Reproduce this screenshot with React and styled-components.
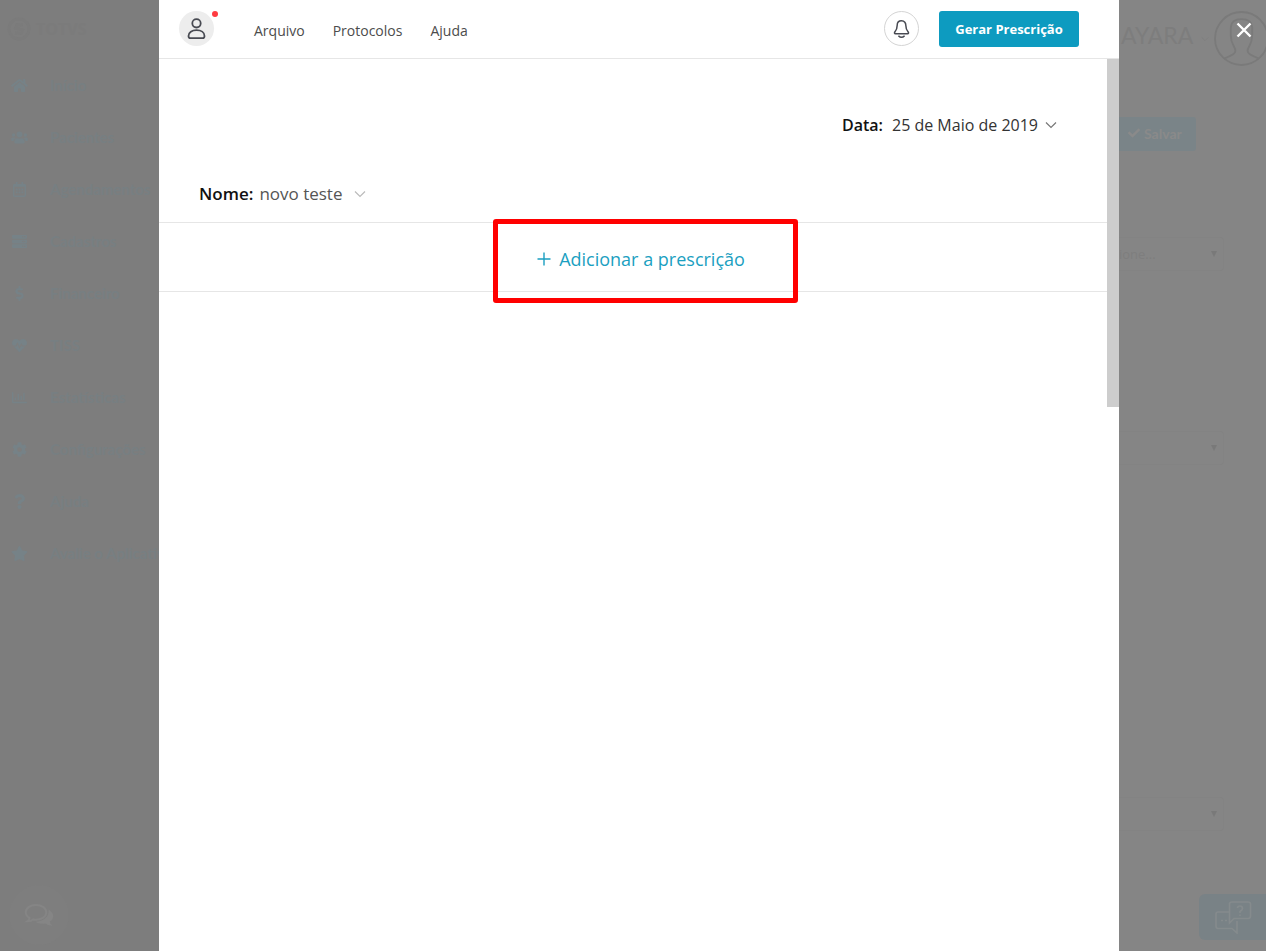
import React from 'react';
import styled, { createGlobalStyle } from 'styled-components';
import {
  FaHome,
  FaUsers,
  FaRegCalendarAlt,
  FaServer,
  FaDollarSign,
  FaHeartbeat,
  FaRegChartBar,
  FaCog,
  FaQuestion,
  FaStar,
  FaCheck,
} from 'react-icons/fa';

const GlobalStyle = createGlobalStyle`
  * {
    box-sizing: border-box;
  }

  body {
    margin: 0;
    font-family: 'Open Sans', sans-serif;
    background: #7d7d7d;
  }

  button, select, input {
    font-family: inherit;
  }
`;

const Page = styled.div`
  display: flex;
  min-height: 100vh;
`;

// Dimmed sidebar
const Sidebar = styled.aside`
  display: flex;
  flex-direction: column;
  flex: 0 0 159px;
  overflow: hidden;
  background: #7d7d7d;
`;

const Brand = styled.div`
  display: flex;
  align-items: center;
  gap: 5px;
  height: 59px;
  padding: 0 0 2px 7px;
  color: #7b7b7b;
  font-size: 16px;
  font-weight: 700;
`;

const SideNav = styled.nav`
  display: flex;
  flex-direction: column;
  flex: 1;
`;

const SideLink = styled.a`
  display: flex;
  align-items: center;
  gap: 22px;
  height: 52px;
  padding-left: 11px;
  color: #777f82;
  font-family: Lato, sans-serif;
  font-size: 15px;
  font-weight: 700;
  white-space: nowrap;
  text-decoration: none;

  svg {
    flex: 0 0 17px;
    color: #768287;
  }
`;

const ChatButton = styled.button`
  display: flex;
  align-items: center;
  justify-content: center;
  width: 60px;
  height: 60px;
  margin: 0 0 6px 9px;
  padding: 0;
  border: 0;
  border-radius: 50%;
  background: #7e7e7e;
  color: #858585;
`;

// Prescription panel
const Panel = styled.main`
  display: flex;
  flex-direction: column;
  flex: 1;
  background: #fff;
`;

const Header = styled.header`
  display: flex;
  align-items: center;
  height: 59px;
  padding: 0 40px 1px 20px;
  border-bottom: 1px solid #e6e6e6;
`;

const ProfileButton = styled.button`
  position: relative;
  display: flex;
  align-items: center;
  justify-content: center;
  width: 35px;
  height: 35px;
  padding: 0;
  border: 0;
  border-radius: 50%;
  background: #ededed;
  color: #484a52;
`;

const Dot = styled.span`
  position: absolute;
  top: 0;
  right: -4px;
  width: 6px;
  height: 6px;
  border-radius: 50%;
  background: #ff3b41;
`;

const Menu = styled.nav`
  display: flex;
  gap: 28px;
  flex: 1;
  padding: 5px 0 0 40px;
`;

const MenuLink = styled.a`
  color: #4c4c4c;
  font-size: 14px;
  line-height: 20px;
  text-decoration: none;
`;

const BellButton = styled.button`
  display: flex;
  align-items: center;
  justify-content: center;
  width: 35px;
  height: 35px;
  margin-right: 20px;
  padding: 0;
  border: 1px solid #d4d4d4;
  border-radius: 50%;
  background: #fff;
  color: #484a52;
`;

const PrimaryButton = styled.button`
  width: 140px;
  height: 36px;
  padding: 0;
  border: 0;
  border-radius: 3px;
  background: #0d9bc0;
  color: #fff;
  font-size: 13px;
  font-weight: 700;
`;

const Body = styled.div`
  display: flex;
  flex: 1;
`;

const Sheet = styled.section`
  flex: 1;
`;

const Scrollbar = styled.div`
  display: flex;
  flex-direction: column;
  width: 12px;
`;

const Thumb = styled.div`
  height: 39%;
  background: #cdcdcd;
`;

const DateRow = styled.div`
  display: flex;
  justify-content: flex-end;
  padding: 54px 50px 0 0;
`;

const NameRow = styled.div`
  display: flex;
  padding: 45px 40px 16px;
  border-bottom: 1px solid #e6e6e6;
`;

const Picker = styled.button`
  display: flex;
  align-items: center;
  padding: 0;
  border: 0;
  background: none;
  color: ${(p) => p.$color};
  font-size: ${(p) => p.$size};
  line-height: 24px;

  strong {
    margin-right: ${(p) => p.$labelGap};
    color: #111;
    font-weight: 600;
  }

  svg {
    margin-left: ${(p) => p.$iconGap};
  }
`;

const AddRow = styled.div`
  display: flex;
  justify-content: center;
  height: 69px;
  border-bottom: 1px solid #e6e6e6;
`;

const AddButton = styled.button`
  position: relative;
  display: flex;
  align-items: center;
  gap: 8px;
  padding: 4px 0 0 16px;
  border: 0;
  background: none;
  color: #1b9fc1;
  font-size: 18px;
  line-height: 24px;
`;

const Highlight = styled.span`
  position: absolute;
  top: -4px;
  right: -53px;
  bottom: -12px;
  left: -28px;
  border: 5px solid #f00;
  border-radius: 3px;
  pointer-events: none;
`;

// Dimmed page on the right
const Backdrop = styled.aside`
  display: flex;
  flex-direction: column;
  flex: 0 0 147px;
  overflow: hidden;
  background: #858585;
`;

const UserBar = styled.div`
  position: relative;
  display: flex;
  align-items: center;
  height: 77px;
  padding-left: 2px;
  color: #7d7d7d;
  font-family: Lato, sans-serif;
  font-size: 23px;
  white-space: nowrap;

  svg {
    flex: none;
  }
`;

const UserName = styled.span`
  width: 80px;
  padding-bottom: 8px;
`;

const UserPhoto = styled.span`
  display: flex;
  margin: 0 -3px 0 auto;
`;

const CloseButton = styled.button`
  position: absolute;
  top: 22px;
  right: 14px;
  display: flex;
  padding: 0;
  border: 0;
  background: none;
  color: #fff;
`;

const SaveButton = styled.button`
  display: flex;
  align-items: center;
  gap: 4px;
  width: 77px;
  height: 34px;
  margin-top: 40px;
  padding: 0 0 2px 9px;
  border: 0;
  border-radius: 0 3px 3px 0;
  background: #7a8488;
  color: #8a8a8a;
  font-family: Lato, sans-serif;
  font-size: 14px;
  font-weight: 700;
`;

const Field = styled.div`
  position: relative;
  width: 105px;
  margin-top: ${(p) => p.$top};

  svg {
    position: absolute;
    top: 14px;
    right: 7px;
    pointer-events: none;
  }
`;

const Select = styled.select`
  display: block;
  width: 100%;
  height: 34px;
  padding: 0;
  appearance: none;
  border: 1px solid #838383;
  border-left: 0;
  border-radius: 0 4px 4px 0;
  background: #858585;
  color: #7e7e7e;
  font-size: 13px;
`;

const Spacer = styled.div`
  flex: 1;
`;

const SupportButton = styled.button`
  align-self: flex-end;
  display: flex;
  align-items: center;
  width: 67px;
  height: 46px;
  margin-bottom: 11px;
  padding: 0 0 0 15px;
  border: 0;
  border-radius: 6px 0 0 6px;
  background: #798286;
  color: #858b8d;
`;

const sideItems = [
  { label: 'Início', Icon: FaHome },
  { label: 'Pacientes', Icon: FaUsers },
  { label: 'Agendamentos', Icon: FaRegCalendarAlt },
  { label: 'Cadastros', Icon: FaServer },
  { label: 'Financeiro', Icon: FaDollarSign },
  { label: 'TISS', Icon: FaHeartbeat },
  { label: 'Estatísticas', Icon: FaRegChartBar },
  { label: 'Configurações', Icon: FaCog },
  { label: 'Ajuda', Icon: FaQuestion },
  { label: 'Avalie o Aplicativo', Icon: FaStar },
];

const BrandMark = () => (
  <svg width="24" height="24" viewBox="0 0 24 24" fill="none" stroke="currentColor" strokeWidth="3">
    <circle cx="12" cy="12" r="10" />
    <path d="M16 8 L10 7.5 L8.5 11 L15.5 13 L14 16.5 L8 16" />
  </svg>
);

const Chevron = ({ color, width = 12 }) => (
  <svg width={width} height="8" viewBox="0 0 12 8" fill="none" stroke={color} strokeWidth="1.2">
    <path d="M1 1.5 L6 6.5 L11 1.5" />
  </svg>
);

const PersonIcon = () => (
  <svg width="19" height="23" viewBox="0 0 19 23" fill="none" stroke="currentColor" strokeWidth="1.8">
    <circle cx="9.5" cy="6.3" r="4.2" />
    <path d="M1.5 19 C1.5 15.3 5 13.1 9.5 13.1 C14 13.1 17.5 15.3 17.5 19 Q17.5 21.2 15.6 21.2 H3.4 Q1.5 21.2 1.5 19 Z" />
  </svg>
);

const BellIcon = () => (
  <svg width="17" height="20" viewBox="0 0 17 20" fill="none" stroke="currentColor" strokeWidth="1.5" strokeLinejoin="round">
    <path d="M8.5 1.8 C5.4 1.8 4.2 4 4.2 6.3 C4.2 10.4 3.2 11.4 1.7 13.1 Q1 14.7 2.4 14.7 H14.6 Q16 14.7 15.3 13.1 C13.8 11.4 12.8 10.4 12.8 6.3 C12.8 4 11.6 1.8 8.5 1.8 Z" />
    <path d="M5.4 16.7 Q8.5 20 11.6 16.7" />
  </svg>
);

const Avatar = () => (
  <svg width="55" height="55" viewBox="0 0 54 54" fill="none" stroke="#7a7a7a" strokeWidth="1.8">
    <circle cx="27" cy="27" r="26" />
    <path d="M10 47 C13 44 21 44 21 39 C21 35 16.5 33 16.5 24 V16 Q17 8 27 8 Q37 8 37.5 16 V24 C37.5 33 33 35 33 39 C33 44 41 44 44 47" />
  </svg>
);

const ChatIcon = () => (
  <svg width="30" height="24" viewBox="0 0 30 24">
    <path
      d="M24.5 6.5 C30 9.5 31 15.5 25.8 18.5 Q26 21 28.5 22.5 Q24 23 21.5 20.5 C17 21.2 13.5 20.3 11.5 18.8 C20 18.5 25.5 13.5 24.5 6.5 Z"
      fill="currentColor"
    />
    <path
      d="M12 2 C6 2 1.8 5.2 1.8 9.3 C1.8 11.8 3.3 13.8 5.6 15 Q5.4 17 3.3 18.3 Q7 18.5 9.2 16.4 C16.5 17.5 22.3 14.2 22.3 9.3 C22.3 5.2 18 2 12 2 Z"
      fill="none"
      stroke="currentColor"
      strokeWidth="2"
    />
  </svg>
);

const SupportIcon = () => (
  <svg width="38" height="34" viewBox="0 0 38 34" fill="none" stroke="currentColor" strokeWidth="1.6">
    <path d="M15 12 H4 Q2 12 2 14 V26 Q2 28.5 4 28.5 H18 L23 33 V21" />
    <path d="M18 2 H34 Q36.5 2 36.5 4 V16 Q36.5 18.5 34 18.5 H20 L15.5 23 V4 Q15.5 2 18 2 Z" />
    <path d="M23.5 8 Q23.5 6 26 6 Q28.5 6 28.5 8.5 Q28.5 10 26 11.5 V13 M26 14.5 V16 M7 20.5 H9 M11 20.5 H13" />
  </svg>
);

const Caret = () => (
  <svg width="6" height="6" viewBox="0 0 6 6" fill="#797979">
    <path d="M0 0 H6 L3 6 Z" />
  </svg>
);

const App = () => {
  return (
    <>
      <GlobalStyle />
      <Page>
        <Sidebar>
          <Brand>
            <BrandMark />
            TOTVS
          </Brand>
          <SideNav>
            {sideItems.map(({ label, Icon }) => (
              <SideLink href="#" key={label}>
                <Icon size={15} />
                {label}
              </SideLink>
            ))}
          </SideNav>
          <ChatButton aria-label="Chat">
            <ChatIcon />
          </ChatButton>
        </Sidebar>

        <Panel>
          <Header>
            <ProfileButton aria-label="Perfil">
              <PersonIcon />
              <Dot />
            </ProfileButton>
            <Menu>
              <MenuLink href="#">Arquivo</MenuLink>
              <MenuLink href="#">Protocolos</MenuLink>
              <MenuLink href="#">Ajuda</MenuLink>
            </Menu>
            <BellButton aria-label="Notificações">
              <BellIcon />
            </BellButton>
            <PrimaryButton>Gerar Prescrição</PrimaryButton>
          </Header>
          <Body>
            <Sheet>
              <DateRow>
                <Picker $size="16px" $labelGap="9px" $iconGap="7px" $color="#333">
                  <strong>Data:</strong>
                  25 de Maio de 2019
                  <Chevron color="#777" />
                </Picker>
              </DateRow>
              <NameRow>
                <Picker $size="17px" $labelGap="6px" $iconGap="12px" $color="#555">
                  <strong>Nome:</strong>
                  novo teste
                  <Chevron color="#bbb" />
                </Picker>
              </NameRow>
              <AddRow>
                <AddButton>
                  <svg width="14" height="14" viewBox="0 0 14 14" stroke="currentColor" strokeWidth="1.4">
                    <path d="M7 0.5 V13.5 M0.5 7 H13.5" />
                  </svg>
                  Adicionar a prescrição
                  <Highlight />
                </AddButton>
              </AddRow>
            </Sheet>
            <Scrollbar>
              <Thumb />
            </Scrollbar>
          </Body>
        </Panel>

        <Backdrop>
          <UserBar>
            <UserName>AYARA</UserName>
            <Chevron color="#7d7d7d" width={8} />
            <UserPhoto>
              <Avatar />
            </UserPhoto>
            <CloseButton aria-label="Fechar">
              <svg width="16" height="16" viewBox="0 0 16 16" stroke="currentColor" strokeWidth="2.4">
                <path d="M1.5 1.5 L14.5 14.5 M14.5 1.5 L1.5 14.5" />
              </svg>
            </CloseButton>
          </UserBar>
          <SaveButton>
            <FaCheck size={12} />
            Salvar
          </SaveButton>
          <Field $top="86px">
            <Select aria-label="Opção">
              <option>ione...</option>
            </Select>
            <Caret />
          </Field>
          <Field $top="160px">
            <Select aria-label="Tipo" />
            <Caret />
          </Field>
          <Field $top="332px">
            <Select aria-label="Modelo" />
            <Caret />
          </Field>
          <Spacer />
          <SupportButton aria-label="Suporte">
            <SupportIcon />
          </SupportButton>
        </Backdrop>
      </Page>
    </>
  );
};

export default App;
